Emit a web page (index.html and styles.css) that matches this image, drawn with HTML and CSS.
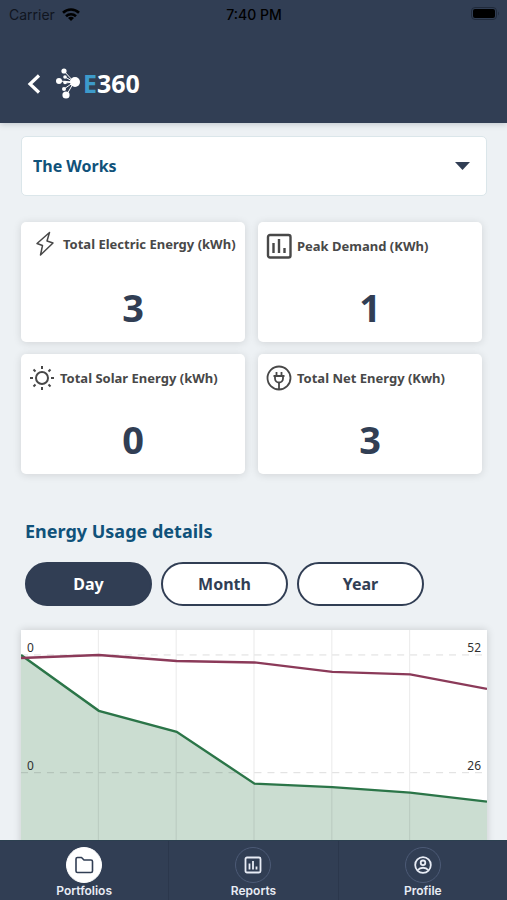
FILE: index.html
```html
<!DOCTYPE html>
<html lang="en">
<head>
    <meta charset="UTF-8">
    <meta name="viewport" content="width=device-width, initial-scale=1.0">
    <title>E360</title>
    <link rel="stylesheet" href="styles.css">
</head>
<body>
    <header class="header">
        <div class="status-bar">
            <div class="carrier">
                <span>Carrier</span>
                <svg width="18" height="13" viewBox="0 0 18 13" fill="none" stroke="#000" stroke-width="2.6">
                    <path d="M1 4.8a11.5 11.5 0 0 1 16 0"/>
                    <path d="M4 8.2a7.2 7.2 0 0 1 10 0"/>
                    <path d="M9 13 6 10a4.200 4.200 0 0 1 6 0z" fill="#000" stroke="none"/>
                </svg>
            </div>
            <span class="time">7:40 PM</span>
            <svg class="battery" width="28" height="14" viewBox="0 0 28 14">
                <rect x="0.5" y="0.5" width="25" height="12" rx="3.5" fill="none" stroke="#202a3b"/>
                <rect x="2" y="2" width="22" height="9" rx="2" fill="#000"/>
                <path d="M27 4.5v4c1-.6 1-3.4 0-4z" fill="#202a3b"/>
            </svg>
        </div>
        <div class="nav-bar">
            <button class="back-btn" aria-label="Back">
                <svg width="14" height="20" viewBox="0 0 14 20" fill="none" stroke="#fff" stroke-width="3.2">
                    <path d="M12 1.5 3 10l9 8.5"/>
                </svg>
            </button>
            <a class="logo" href="#">
                <svg width="26" height="32" viewBox="0 0 26 32" fill="#fff" stroke="#fff">
                    <path d="M19 14 9 3M19 14 4 13M19 14 10 9M19 14 10 15M19 14 9 21M19 14 11 28" stroke-width="1" fill="none"/>
                    <g stroke="none">
                        <circle cx="9" cy="3" r="2.6"/>
                        <circle cx="4" cy="13" r="3"/>
                        <circle cx="10" cy="9" r="1.8"/>
                        <circle cx="10" cy="14.5" r="1.8"/>
                        <circle cx="9" cy="21" r="2"/>
                        <circle cx="11" cy="27" r="3.6"/>
                        <circle cx="20" cy="14" r="5"/>
                    </g>
                </svg>
                <span class="logo-text"><span class="logo-e">E</span>360</span>
            </a>
        </div>
    </header>

    <main class="content">
        <div class="site-select">
            <select aria-label="Portfolio">
                <option>The Works</option>
            </select>
            <svg class="caret" width="15" height="8" viewBox="0 0 15 8"><path d="M0 0h15L7.5 8z" fill="#313e54"/></svg>
        </div>

        <section class="cards">
            <div class="card">
                <div class="card-title electric">
                    <svg width="26" height="26" viewBox="0 0 26 26" fill="none" stroke="#484848" stroke-width="1.5" stroke-linejoin="round">
                        <path d="M17.5 1.5 5 12.500l5.500 2L8.500 24 21 12l-6-2z"/>
                    </svg>
                    <h2>Total Electric Energy (kWh)</h2>
                </div>
                <p class="card-value">3</p>
            </div>
            <div class="card">
                <div class="card-title">
                    <svg width="26" height="26" viewBox="0 0 26 26" fill="none" stroke="#484848" stroke-width="2.4">
                        <rect x="2" y="2" width="22.500" height="22.500" rx="2"/>
                        <path d="M7.5 10v10M13 6v14M18.500 15v5"/>
                    </svg>
                    <h2>Peak Demand (KWh)</h2>
                </div>
                <p class="card-value">1</p>
            </div>
            <div class="card">
                <div class="card-title">
                    <svg width="26" height="26" viewBox="0 0 26 26" fill="none" stroke="#484848" stroke-width="2">
                        <circle cx="13" cy="13" r="6"/>
                        <path d="M13 1v3M13 22v3M1 13h3M22 13h3M4.500 4.500l2 2M19.500 19.500l2 2M4.500 21.500l2-2M19.500 6.500l2-2"/>
                    </svg>
                    <h2>Total Solar Energy (kWh)</h2>
                </div>
                <p class="card-value">0</p>
            </div>
            <div class="card">
                <div class="card-title">
                    <svg width="26" height="26" viewBox="0 0 26 26" fill="none" stroke="#484848" stroke-width="1.8">
                        <circle cx="13" cy="13" r="11.5"/>
                        <path d="M10.500 7v4M15.500 7v4M13 17v7.500"/>
                        <path d="M7.500 11h11M9 11v2.500a4 4 0 0 0 8 0V11"/>
                    </svg>
                    <h2>Total Net Energy (Kwh)</h2>
                </div>
                <p class="card-value">3</p>
            </div>
        </section>

        <section class="usage">
            <h1>Energy Usage details</h1>
            <div class="range-buttons">
                <button class="range-btn active">Day</button>
                <button class="range-btn">Month</button>
                <button class="range-btn">Year</button>
            </div>
            <div class="chart">
                <svg viewBox="0 0 467 300" role="img" aria-label="Energy usage by day">
                    <path class="area" d="M0 26 78 81 156 102 234 154 312 157.5 390 163 467 172V300H0z"/>
                    <path class="grid-v" d="M77.5 0V300M155.5 0V300M233.5 0V300M311.5 0V300M389.5 0V300"/>
                    <path class="grid-h" d="M0 25H467M0 143H467M0 261H467"/>
                    <path class="line green" stroke-width="2.4" d="M0 25 78 81 156 102 234 154 312 157.5 390 163 467 172"/>
                    <path class="line red" stroke-width="2.4" d="M0 28 78 25 156 31 234 32.5 312 42 390 44.5 467 59"/>
                    <text x="6" y="22">0</text>
                    <text x="6" y="140">0</text>
                    <text x="461" y="22" text-anchor="end">52</text>
                    <text x="461" y="140" text-anchor="end">26</text>
                </svg>
            </div>
        </section>
    </main>

    <nav class="tab-bar">
        <a class="tab active" href="#">
            <span class="tab-icon">
                <svg width="20" height="18" viewBox="0 0 20 18" fill="none" stroke="#313e54" stroke-width="1.6" stroke-linejoin="round">
                    <path d="M2 3a1.5 1.5 0 0 1 1.5-1.5h4L10 4h7a1.5 1.5 0 0 1 1.5 1.5V15a1.5 1.5 0 0 1-1.5 1.5H3.5A1.5 1.5 0 0 1 2 15z"/>
                </svg>
            </span>
            <span>Portfolios</span>
        </a>
        <a class="tab" href="#">
            <span class="tab-icon">
                <svg width="18" height="18" viewBox="0 0 18 18" fill="none" stroke="#e8ecf5" stroke-width="1.8">
                    <rect x="1.5" y="1.5" width="15" height="15" rx="1.5"/>
                    <path d="M5.5 7.500v6M9 5v8.500M12.500 10.500v3"/>
                </svg>
            </span>
            <span>Reports</span>
        </a>
        <a class="tab" href="#">
            <span class="tab-icon">
                <svg width="18" height="18" viewBox="0 0 18 18" fill="none" stroke="#e8ecf5" stroke-width="1.8">
                    <circle cx="9" cy="9" r="7.8"/>
                    <circle cx="9" cy="6.8" r="2.3"/>
                    <path d="M3.800 14c2.500-3 8-3 10.400 0"/>
                </svg>
            </span>
            <span>Profile</span>
        </a>
    </nav>
</body>
</html>
```
FILE: styles.css
```css
* {
    margin: 0;
    padding: 0;
    box-sizing: border-box;
}

body {
    display: flex;
    flex-direction: column;
    height: 100vh;
    font-family: 'Noto Sans', 'Open Sans', sans-serif;
    background: #edf1f4;
    color: #313e54;
}

svg {
    display: block;
    flex-shrink: 0;
}

a {
    color: inherit;
    text-decoration: none;
}

button {
    font-family: inherit;
    cursor: pointer;
}

.header {
    background: #313e54;
    padding-bottom: 20px;
    box-shadow: 0 1px 6px rgba(49, 62, 84, 0.25);
    z-index: 1;
}

.status-bar {
    display: grid;
    grid-template-columns: 1fr auto 1fr;
    align-items: center;
    height: 28px;
    padding: 0 8px 0 9px;
    font-family: Inter, sans-serif;
    font-size: 14px;
    color: #000;
}

.carrier {
    display: flex;
    align-items: center;
    gap: 7px;
    color: #10151f;
}

.time {
    font-weight: 500;
}

.battery {
    justify-self: end;
}

.nav-bar {
    display: flex;
    align-items: center;
    gap: 14px;
    padding: 36px 27px 0;
}

.back-btn {
    background: none;
    border: none;
}

.logo {
    display: flex;
    align-items: center;
    gap: 2px;
}

.logo-text {
    font-family: 'Open Sans', sans-serif;
    font-size: 25px;
    font-weight: bold;
    line-height: 39px;
    color: white;
}

.logo-e {
    color: #3d9bcb;
}

.content {
    flex: 1;
    min-height: 0;
    overflow-y: auto;
    scrollbar-width: none;
    padding: 13px 20px 0 21px;
}

.site-select {
    position: relative;
}

.site-select select {
    appearance: none;
    width: 100%;
    height: 60px;
    padding: 0 40px 0 11px;
    border: 1px solid #dbe6ea;
    border-radius: 5px;
    background: white;
    font-family: inherit;
    font-size: 16px;
    font-weight: bold;
    color: #10527a;
}

.caret {
    position: absolute;
    right: 17px;
    top: 26px;
    pointer-events: none;
}

.cards {
    display: grid;
    grid-template-columns: 1fr 1fr;
    gap: 12px 13px;
    margin: 26px 5px 0 0;
}

.card {
    height: 120px;
    padding: 10px 8px;
    background: white;
    border-radius: 5px;
    box-shadow: 0 1px 8px rgba(0, 0, 0, 0.12);
}

.card-title {
    display: flex;
    align-items: center;
    gap: 5px;
    height: 28px;
}

.card-title.electric {
    padding-left: 3px;
    height: 24px;
    margin-bottom: 24px;
}

.card-title h2 {
    font-size: 13px;
    line-height: 18px;
    color: #484848;
    white-space: nowrap;
}

.card-value {
    margin-top: 20px;
    font-size: 38px;
    font-weight: bold;
    line-height: 54px;
    text-align: center;
}

.usage {
    margin-top: 44px;
}

.usage h1 {
    padding-left: 4px;
    font-size: 18px;
    line-height: 26px;
    color: #10527a;
}

.range-buttons {
    display: flex;
    gap: 9px;
    padding: 0 4px;
    margin-top: 18px;
}

.range-btn {
    flex: 0 1 127px;
    height: 44px;
    border: 2px solid #313e54;
    border-radius: 22px;
    background: white;
    color: #313e54;
    font-size: 16px;
    font-weight: bold;
}

.range-btn.active {
    background: #313e54;
    color: white;
}

.chart {
    margin-top: 24px;
    background: white;
    box-shadow: 0 0 8px rgba(0, 0, 0, 0.16);
}

.chart svg {
    width: 100%;
}

.chart text {
    font-size: 12px;
    fill: #303030;
}

.area {
    fill: #cbddd1;
}

.grid-v {
    stroke: rgba(0, 0, 0, 0.09);
}

.grid-h {
    stroke: rgba(0, 0, 0, 0.14);
    stroke-dasharray: 7 6;
}

.line {
    fill: none;
}

.green {
    stroke: #2b7548;
}

.red {
    stroke: #8b3a59;
}

.tab-bar {
    display: flex;
    background: #313e54;
    border-top: 1px solid #2c4050;
    z-index: 1;
}

.tab {
    flex: 1;
    display: flex;
    flex-direction: column;
    align-items: center;
    padding: 6px 0 1px;
    font-family: Inter, sans-serif;
    font-size: 12px;
    font-weight: 600;
    line-height: 16px;
    color: #e8ecf5;
}

.tab + .tab {
    border-left: 1px solid #2b374c;
}

.tab-icon {
    display: flex;
    align-items: center;
    justify-content: center;
    width: 36px;
    height: 36px;
    border: 1px solid #4c5a76;
    border-radius: 50%;
}

.tab.active .tab-icon {
    background: white;
    border-color: white;
}
```
